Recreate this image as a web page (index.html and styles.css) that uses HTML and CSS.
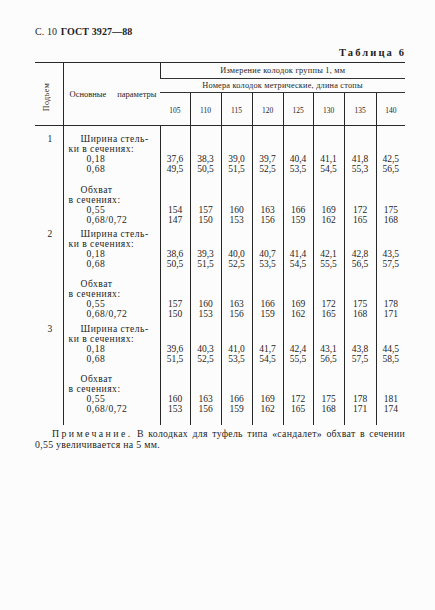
FILE: index.html
```html
<!DOCTYPE html>
<html lang="ru">
<head>
<meta charset="utf-8">
<link rel="stylesheet" href="styles.css">
</head>
<body>
<div class="page">
  <div class="running-head">С. 10 <b>ГОСТ 3927—88</b></div>
  <div class="caption">Таблица 6</div>
  <table class="tbl">
    <colgroup>
      <col class="c1"><col class="c2">
      <col class="d30"><col class="d31"><col class="d31"><col class="d31"><col class="d30"><col class="d31"><col class="d32"><col class="d29">
    </colgroup>
    <thead>
      <tr class="hA">
        <th rowspan="3" class="lift"><span class="vert">Подъем</span></th>
        <th rowspan="3" class="params"><div class="params-in"><span>Основные</span><span>параметры</span></div></th>
        <th colspan="8" class="span">Измерение колодок группы 1, мм</th>
      </tr>
      <tr class="hB">
        <th colspan="8" class="span">Номера колодок метрические, длина стопы</th>
      </tr>
      <tr class="hC">
        <th class="num">105</th><th class="num">110</th><th class="num">115</th><th class="num">120</th><th class="num">125</th><th class="num">130</th><th class="num">135</th><th class="num">140</th>
      </tr>
    </thead>
    <tbody>
      <tr class="p8">
        <td class="idx">1</td>
        <td class="par"><div class="t1">Ширина стель-</div><div class="t2">ки в сечениях:</div><div class="t3">0,18</div><div class="t3">0,68</div></td>
        <td>37,6<br>49,5</td><td>38,3<br>50,5</td><td>39,0<br>51,5</td><td>39,7<br>52,5</td><td>40,4<br>53,5</td><td>41,1<br>54,5</td><td>41,8<br>55,3</td><td>42,5<br>56,5</td>
      </tr>
      <tr class="p11">
        <td class="idx"></td>
        <td class="par"><div class="t1">Обхват</div><div class="t2">в сечениях:</div><div class="t3">0,55</div><div class="t3">0,68/0,72</div></td>
        <td>154<br>147</td><td>157<br>150</td><td>160<br>153</td><td>163<br>156</td><td>166<br>159</td><td>169<br>162</td><td>172<br>165</td><td>175<br>168</td>
      </tr>
      <tr class="p4">
        <td class="idx">2</td>
        <td class="par"><div class="t1">Ширина стель-</div><div class="t2">ки в сечениях:</div><div class="t3">0,18</div><div class="t3">0,68</div></td>
        <td>38,6<br>50,5</td><td>39,3<br>51,5</td><td>40,0<br>52,5</td><td>40,7<br>53,5</td><td>41,4<br>54,5</td><td>42,1<br>55,5</td><td>42,8<br>56,5</td><td>43,5<br>57,5</td>
      </tr>
      <tr class="p10">
        <td class="idx"></td>
        <td class="par"><div class="t1">Обхват</div><div class="t2">в сечениях:</div><div class="t3">0,55</div><div class="t3">0,68/0,72</div></td>
        <td>157<br>150</td><td>160<br>153</td><td>163<br>156</td><td>166<br>159</td><td>169<br>162</td><td>172<br>165</td><td>175<br>168</td><td>178<br>171</td>
      </tr>
      <tr class="p5">
        <td class="idx">3</td>
        <td class="par"><div class="t1">Ширина стель-</div><div class="t2">ки в сечениях:</div><div class="t3">0,18</div><div class="t3">0,68</div></td>
        <td>39,6<br>51,5</td><td>40,3<br>52,5</td><td>41,0<br>53,5</td><td>41,7<br>54,5</td><td>42,4<br>55,5</td><td>43,1<br>56,5</td><td>43,8<br>57,5</td><td>44,5<br>58,5</td>
      </tr>
      <tr class="p10">
        <td class="idx"></td>
        <td class="par"><div class="t1">Обхват</div><div class="t2">в сечениях:</div><div class="t3">0,55</div><div class="t3">0,68/0,72</div></td>
        <td>160<br>153</td><td>163<br>156</td><td>166<br>159</td><td>169<br>162</td><td>172<br>165</td><td>175<br>168</td><td>178<br>171</td><td>181<br>174</td>
      </tr>
      <tr class="tail">
        <td></td><td></td><td></td><td></td><td></td><td></td><td></td><td></td><td></td><td></td>
      </tr>
    </tbody>
  </table>
  <div class="note">
    <div class="note-l1"><span class="spaced">Примечание.</span> В колодках для туфель типа «сандалет» обхват в сечении</div>
    <div class="note-l2">0,55 увеличивается на 5 мм.</div>
  </div>
</div>
</body>
</html>
```

FILE: styles.css
```css
html, body {
  margin: 0;
  padding: 0;
  background: #fcfcfc;
}
body {
  font-family: "Liberation Serif", "Times New Roman", serif;
  color: #1e1e1e;
}
.page {
  width: 370px;
  padding: 26px 0 0 35px;
}
.running-head {
  font-size: 10px;
  line-height: 12px;
  height: 12px;
  letter-spacing: 0.1px;
}
.running-head b {
  font-weight: bold;
  margin-left: 1px;
}
.caption {
  margin-top: 9px;
  text-align: right;
  font-size: 10.5px;
  line-height: 12px;
  letter-spacing: 2.1px;
  margin-right: -1px;
  font-weight: bold;
}
.tbl {
  margin-top: 3px;
  width: 370px;
  table-layout: fixed;
  border-collapse: collapse;
  font-size: 9px;
}
.c1 { width: 28px; }
.c2 { width: 97px; }
.d29 { width: 29px; }
.d30 { width: 30px; }
.d31 { width: 31px; }
.d32 { width: 32px; }
.tbl th, .tbl td {
  padding: 0;
  font-weight: normal;
  border-left: 1px solid #262626;
}
.tbl tr > :first-child {
  border-left: none;
}
.tbl thead tr.hA th {
  border-top: 1px solid #2a2a2a;
}
.hA th { height: 15px; }
.hB th { height: 13px; }
.hC th { height: 30px; }
.span {
  border-bottom: 1px solid #333;
  font-size: 8.3px;
  letter-spacing: 0.25px;
  line-height: 10px;
  text-align: center;
}
.hB .span {
  letter-spacing: 0.2px;
}
.lift, .params, .num {
  border-bottom: 1px solid #2a2a2a;
}
.lift {
  text-align: left;
  padding-left: 7px !important;
  vertical-align: middle;
}
.vert {
  display: inline-block;
  writing-mode: vertical-rl;
  transform: rotate(180deg);
  font-size: 8px;
  letter-spacing: 0.3px;
  margin-top: 8px;
}
.params {
  padding: 0 3px 0 6px !important;
  font-size: 8.5px;
  vertical-align: middle;
}
.params-in {
  display: flex;
  justify-content: space-between;
  white-space: nowrap;
}
.num {
  font-size: 7.5px;
  text-align: center;
  vertical-align: middle;
  padding-top: 2px !important;
}
.tbl tbody td {
  line-height: 10px;
  font-size: 9.5px;
  vertical-align: bottom;
  text-align: center;
}
.tbl tbody td.idx {
  vertical-align: top;
  text-align: center;
  padding-left: 2px;
}
.tbl tbody td.par {
  text-align: left;
  vertical-align: top;
  font-size: 9.6px;
  letter-spacing: 0.5px;
  white-space: nowrap;
}
.t1 { padding-left: 17px; }
.t2 { padding-left: 5px; }
.t3 { padding-left: 23px; }
.p8 td { padding-top: 8px; }
.p11 td { padding-top: 11px; }
.p4 td { padding-top: 4px; }
.p10 td { padding-top: 10px; }
.p5 td { padding-top: 5px; }
.tail td { height: 11px; }
.note {
  margin-top: 3px;
  font-size: 9.8px;
  line-height: 11px;
  letter-spacing: 0.3px;
}
.note-l1 {
  padding-left: 17px;
  text-align: justify;
  text-align-last: justify;
}
.spaced {
  letter-spacing: 2.4px;
}
```
